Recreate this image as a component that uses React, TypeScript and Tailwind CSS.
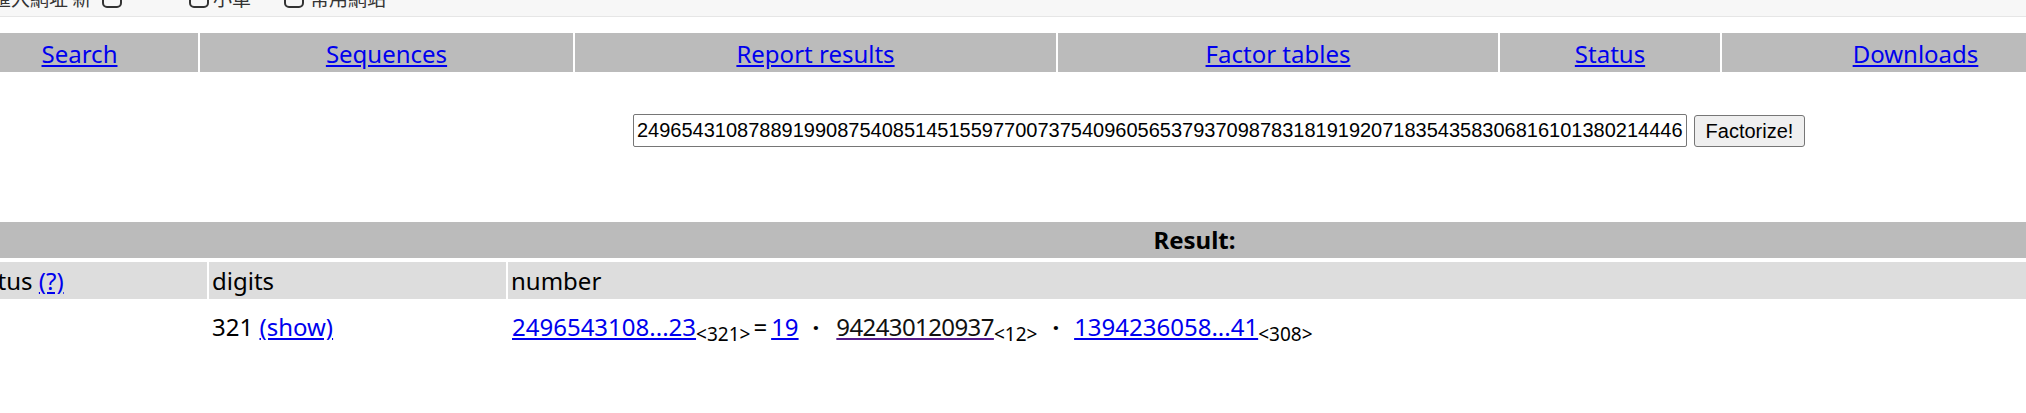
import React from "react";

const navItems = [
  { label: "Search", w: "w-[237px]" },
  { label: "Sequences", w: "w-[373px]" },
  { label: "Report results", w: "w-[481px]" },
  { label: "Factor tables", w: "w-[440px]" },
  { label: "Status", w: "w-[220px]" },
  { label: "Downloads", w: "w-[387px]" },
];

const bigNumber =
  "24965431087889199087540851451559770073754096056537937098783181919207183543583068161013802144466270397513384766851497281360530093371218153046523";

function BookmarkIcon() {
  return <span className="inline-block w-[20px] h-[20px] border-[2px] border-[#333] rounded-[5px] shrink-0" />;
}

export default function App() {
  return (
    <div className="w-[2026px] h-[413px] overflow-hidden bg-white font-['Noto_Sans',sans-serif] text-black">
      {/* browser bookmark bar, cut at the top */}
      <div className="h-[17px] bg-[#f7f7f7] border-b border-[#e6e6e6] overflow-hidden">
        <div className="flex items-center h-[22px] -mt-[13px] text-[19px] text-[#333] font-['Noto_Sans_CJK_TC',sans-serif]">
          <span className="w-[110px] -ml-[8px] whitespace-nowrap">匯入網址 新</span>
          <BookmarkIcon />
          <span className="w-[67px]" />
          <BookmarkIcon />
          <span className="ml-[4px] w-[71px] whitespace-nowrap">小單</span>
          <BookmarkIcon />
          <span className="ml-[6px] whitespace-nowrap">常用網站</span>
        </div>
      </div>

      {/* nav table */}
      <div className="mt-[16px] -ml-[39px] w-[2148px] h-[39px] flex gap-[2px]">
        {navItems.map((item) => (
          <div key={item.label} className={`${item.w} bg-[#bbbbbb] flex items-center justify-center pt-[2px]`}>
            <a href="#" className="text-[#0000ee] underline text-[24px] leading-none">
              {item.label}
            </a>
          </div>
        ))}
      </div>

      {/* form */}
      <div className="mt-[42px] pl-[633px] flex items-center gap-[7px]">
        <input
          readOnly
          value={bigNumber}
          className="w-[1054px] h-[33px] border border-[#767676] rounded-[2px] px-[3px] text-[20px] font-['Liberation_Sans',Arial,sans-serif] outline-none"
        />
        <button className="w-[111px] h-[32px] bg-[#efefef] border border-[#767676] rounded-[3px] text-[20px] font-['Liberation_Sans',Arial,sans-serif]">
          Factorize!
        </button>
      </div>

      {/* result table */}
      <div className="mt-[75px] -ml-[39px] w-[2467px] flex flex-col">
        <div className="h-[36px] bg-[#bbbbbb] flex items-center justify-center font-bold text-[24px]">Result:</div>
        <div className="mt-[4px] h-[37px] flex gap-[2px] text-[24px]">
          <div className="w-[246px] bg-[#dddddd] flex items-center px-[3px] whitespace-nowrap">
            status&nbsp;<a href="#" className="text-[#0000ee] underline">(?)</a>
          </div>
          <div className="w-[297px] bg-[#dddddd] flex items-center px-[3px]">digits</div>
          <div className="flex-1 bg-[#dddddd] flex items-center px-[3px]">number</div>
        </div>
        <div className="mt-[2px] h-[52px] flex gap-[2px] text-[24px]">
          <div className="w-[246px]" />
          <div className="w-[297px] flex items-center px-[3px] whitespace-nowrap">
            321&nbsp;<a href="#" className="text-[#0000ee] underline">(show)</a>
          </div>
          <div className="flex-1 flex items-center px-[4px] whitespace-nowrap">
            <span>
              <a href="#" className="text-[#0000ee] underline">2496543108...23</a>
              <sub className="text-[19px]">&lt;321&gt;</sub>
              <span className="ml-[3px] mr-[4px]">=</span>
              <a href="#" className="text-[#0000ee] underline">19</a>
              <span className="ml-[14px] mr-[17px] font-bold">·</span>
              <a href="#" className="text-[#111] underline decoration-[#551a8b] tracking-[-0.6px]">942430120937</a>
              <sub className="text-[19px]">&lt;12&gt;</sub>
              <span className="ml-[15px] mr-[15px] font-bold">·</span>
              <a href="#" className="text-[#0000ee] underline">1394236058...41</a>
              <sub className="text-[19px]">&lt;308&gt;</sub>
            </span>
          </div>
        </div>
      </div>
    </div>
  );
}
